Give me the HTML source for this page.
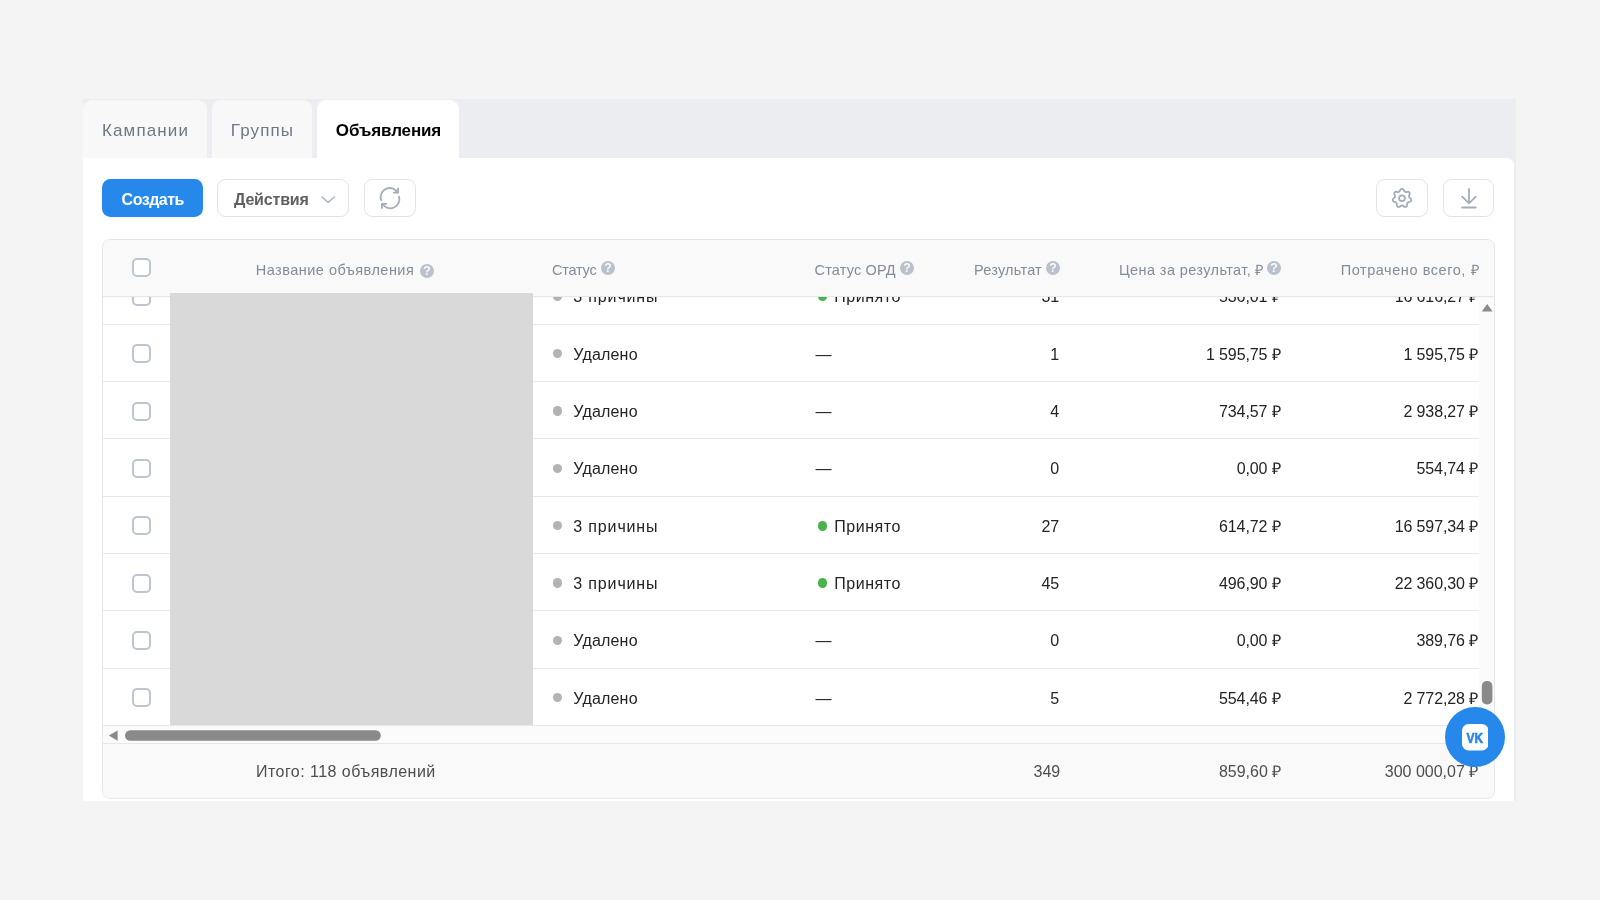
<!DOCTYPE html>
<html lang="ru">
<head>
<meta charset="utf-8">
<title>Объявления</title>
<style>
*{box-sizing:border-box;margin:0;padding:0}
html,body{width:1600px;height:900px;overflow:hidden}
body{background:#f4f4f4;font-family:"Liberation Sans",sans-serif;font-size:16px;color:#222;position:relative}
.abs{position:absolute}
#root{position:absolute;left:0;top:0;width:1600px;height:900px;will-change:transform}
#tabbar{left:83px;top:99.2px;width:1433.3px;height:702px;background:#ebedf0}
#panel{left:83px;top:157.7px;width:1431.3px;height:643.5px;background:#fff;border-radius:0 7px 0 0}
.tab{top:100.4px;height:57.2px;border-radius:9px 9px 0 0;background:#f8f8f9;color:#6d7885;font-size:17px;line-height:61.4px;white-space:nowrap}
.tab span{position:absolute}
.tab.act{background:#fff;color:#000;font-weight:bold}
.btn{top:179px;height:38px;border-radius:8.5px;border:1.3px solid #e1e3e6;background:#fff}
#create{left:102px;width:100.5px;top:179.2px;background:#2688eb;border:none;color:#fff;font-weight:bold;font-size:16px;line-height:42.2px;white-space:nowrap}
#actions{left:217.3px;width:131.7px;color:#5d5f61;font-weight:bold;font-size:16px;line-height:40.4px;white-space:nowrap}
#table{left:102px;top:239px;width:1393px;height:560px;border:1px solid #e6e7e9;border-radius:8px;background:#fff;overflow:hidden}
#thead{left:0;top:0;width:1391px;height:57.3px;background:#f9f9f9;border-bottom:1px solid #e7e7e9;box-shadow:0 1px 1px rgba(0,0,0,.02)}
.th{color:#838c98;font-size:14.5px;white-space:nowrap;line-height:20px;top:20px}
.row{left:0;width:1376px;height:57.333px}
.sep{left:0;width:1376px;height:1px;background:#e7e8ea}
.cb{width:19px;height:19px;border:2px solid #bcc5d0;border-radius:5px;background:#fff;left:29px}
.cell{white-space:nowrap;line-height:20px;font-size:16px;color:#222324}
.n{letter-spacing:-0.12px}
.dot{width:9.3px;height:9.3px;border-radius:50%;background:#b3b3b3}
.dot.g{width:9.6px;height:9.6px}
.dot.g{background:#4bb34b}
#gray{left:170px;top:293px;width:363px;height:432px;background:#d9d9d9}
#hscroll{left:0;top:486px;width:1391px;height:18px;background:#fbfbfb}
#tfoot{left:0;top:503px;width:1391px;height:56px;background:#f9f9f9;border-top:1px solid #e7e7e9}
#vscroll{left:1376px;top:57px;width:15px;height:429px;background:#fbfbfb}
.ft{color:#4d4e50}
</style>
</head>
<body>
<div id="root">
<div id="tabbar" class="abs"></div>
<div id="panel" class="abs"></div>
<div class="abs tab" style="left:83px;width:124px"><span style="left:19px;letter-spacing:1.129px">Кампании</span></div>
<div class="abs tab" style="left:212px;width:100px"><span style="left:18.8px;letter-spacing:1.119px">Группы</span></div>
<div class="abs tab act" style="left:317px;width:142px"><span style="left:18.8px;letter-spacing:-0.135px">Объявления</span></div>

<div id="create" class="abs btn"><span class="abs" style="left:19.6px;letter-spacing:-0.508px">Создать</span></div>
<div id="actions" class="abs btn"><span class="abs" style="left:15.7px;letter-spacing:-0.183px">Действия</span></div>
<svg class="abs" style="left:318px;top:192px" width="20" height="14" viewBox="0 0 20 14"><path d="M3.9 5.0 L10.1 10.3 L16.3 5.0" fill="none" stroke="#aeb7c2" stroke-width="1.6" stroke-linecap="round" stroke-linejoin="round"/></svg>
<div class="abs btn" style="left:364.3px;width:51.5px"></div>
<svg class="abs" style="left:376px;top:184px" width="28" height="28" viewBox="376 184 28 28" fill="none" stroke="#a3adb9" stroke-width="1.8" stroke-linecap="round" stroke-linejoin="round">
<path d="M381.2 200.2 A9.1 9.1 0 0 1 397.6 192.5"/><path d="M398.1 188.3 V192.6 H393.8"/>
<path d="M399.0 196.6 A9.1 9.1 0 0 1 382.6 204.1"/><path d="M381.9 208.1 V203.8 H386.2"/>
</svg>
<div class="abs btn" style="left:1376.3px;width:51.5px"></div>
<svg class="abs" style="left:1388px;top:184px" width="28" height="28" viewBox="1388 184 28 28" fill="none" stroke="#a3adb9" stroke-width="1.8" stroke-linejoin="round">
<path d="M1410.30 198.30 L1409.59 197.73 L1409.19 197.22 L1408.97 196.71 L1408.94 196.16 L1409.09 195.52 L1409.48 194.70 L1409.78 193.81 L1409.71 193.04 L1409.39 192.41 L1408.84 191.95 L1408.11 191.71 L1407.17 191.81 L1406.29 192.01 L1405.63 192.01 L1405.10 191.86 L1404.66 191.53 L1404.24 191.02 L1403.85 190.21 L1403.34 189.42 L1402.70 188.99 L1402.00 188.85 L1401.30 188.99 L1400.66 189.42 L1400.15 190.21 L1399.76 191.02 L1399.34 191.53 L1398.90 191.86 L1398.37 192.01 L1397.71 192.01 L1396.83 191.81 L1395.89 191.71 L1395.16 191.95 L1394.61 192.41 L1394.29 193.04 L1394.22 193.81 L1394.52 194.70 L1394.91 195.52 L1395.06 196.16 L1395.03 196.71 L1394.81 197.22 L1394.41 197.73 L1393.70 198.30 L1393.04 198.97 L1392.77 199.69 L1392.79 200.40 L1393.08 201.05 L1393.64 201.58 L1394.52 201.90 L1395.40 202.11 L1396.00 202.39 L1396.41 202.76 L1396.67 203.24 L1396.82 203.88 L1396.83 204.79 L1396.94 205.72 L1397.33 206.38 L1397.90 206.81 L1398.59 206.99 L1399.35 206.88 L1400.15 206.39 L1400.86 205.83 L1401.46 205.55 L1402.00 205.45 L1402.54 205.55 L1403.14 205.83 L1403.85 206.39 L1404.65 206.88 L1405.41 206.99 L1406.10 206.81 L1406.67 206.38 L1407.06 205.72 L1407.17 204.79 L1407.18 203.88 L1407.33 203.24 L1407.59 202.76 L1408.00 202.39 L1408.60 202.11 L1409.48 201.90 L1410.36 201.58 L1410.92 201.05 L1411.21 200.40 L1411.23 199.69 L1410.96 198.97Z"/><circle cx="1402" cy="198.3" r="2.9"/>
</svg>
<div class="abs btn" style="left:1443.3px;width:51.2px"></div>
<svg class="abs" style="left:1455px;top:184px" width="28" height="28" viewBox="1455 184 28 28" fill="none" stroke="#a3adb9" stroke-width="1.8" stroke-linecap="round" stroke-linejoin="round">
<path d="M1469 188.9 V203.3 M1462.2 196.6 L1469 203.4 L1475.8 196.6 M1462.2 207.5 H1475.8"/>
</svg>

<div id="table" class="abs">

<div class="abs row" style="top:26.87px">
<div class="abs cb" style="top:20.07px"></div>
<div class="abs dot" style="left:450px;top:24.72px"></div>
<div class="abs cell" style="left:470.3px;top:20.27px"><span style="letter-spacing:0.85px">3 причины</span></div>
<div class="abs dot g" style="left:714.5px;top:24.72px"></div>
<div class="abs cell" style="left:731.3px;top:20.27px"><span style="letter-spacing:0.518px">Принято</span></div>
<div class="abs cell n" style="right:420.0px;top:20.27px">31</div>
<div class="abs cell n" style="right:198.5px;top:20.27px">536,01 ₽</div>
<div class="abs cell n" style="right:1.0px;top:20.27px">16 616,27 ₽</div>
</div>
<div class="abs sep" style="top:83.70px"></div>
<div class="abs row" style="top:84.20px">
<div class="abs cb" style="top:20.07px"></div>
<div class="abs dot" style="left:450px;top:24.72px"></div>
<div class="abs cell" style="left:470.3px;top:20.87px"><span style="letter-spacing:0.188px">Удалено</span></div>
<div class="abs cell" style="left:712.4px;top:20.87px">—</div>
<div class="abs cell n" style="right:420.0px;top:20.87px">1</div>
<div class="abs cell n" style="right:198.5px;top:20.87px">1 595,75 ₽</div>
<div class="abs cell n" style="right:1.0px;top:20.87px">1 595,75 ₽</div>
</div>
<div class="abs sep" style="top:141.04px"></div>
<div class="abs row" style="top:141.54px">
<div class="abs cb" style="top:20.07px"></div>
<div class="abs dot" style="left:450px;top:24.72px"></div>
<div class="abs cell" style="left:470.3px;top:20.27px"><span style="letter-spacing:0.188px">Удалено</span></div>
<div class="abs cell" style="left:712.4px;top:20.27px">—</div>
<div class="abs cell n" style="right:420.0px;top:20.27px">4</div>
<div class="abs cell n" style="right:198.5px;top:20.27px">734,57 ₽</div>
<div class="abs cell n" style="right:1.0px;top:20.27px">2 938,27 ₽</div>
</div>
<div class="abs sep" style="top:198.37px"></div>
<div class="abs row" style="top:198.87px">
<div class="abs cb" style="top:20.07px"></div>
<div class="abs dot" style="left:450px;top:24.72px"></div>
<div class="abs cell" style="left:470.3px;top:20.27px"><span style="letter-spacing:0.188px">Удалено</span></div>
<div class="abs cell" style="left:712.4px;top:20.27px">—</div>
<div class="abs cell n" style="right:420.0px;top:20.27px">0</div>
<div class="abs cell n" style="right:198.5px;top:20.27px">0,00 ₽</div>
<div class="abs cell n" style="right:1.0px;top:20.27px">554,74 ₽</div>
</div>
<div class="abs sep" style="top:255.70px"></div>
<div class="abs row" style="top:256.20px">
<div class="abs cb" style="top:20.07px"></div>
<div class="abs dot" style="left:450px;top:24.72px"></div>
<div class="abs cell" style="left:470.3px;top:20.87px"><span style="letter-spacing:0.85px">3 причины</span></div>
<div class="abs dot g" style="left:714.5px;top:24.72px"></div>
<div class="abs cell" style="left:731.3px;top:20.87px"><span style="letter-spacing:0.518px">Принято</span></div>
<div class="abs cell n" style="right:420.0px;top:20.87px">27</div>
<div class="abs cell n" style="right:198.5px;top:20.87px">614,72 ₽</div>
<div class="abs cell n" style="right:1.0px;top:20.87px">16 597,34 ₽</div>
</div>
<div class="abs sep" style="top:313.03px"></div>
<div class="abs row" style="top:313.53px">
<div class="abs cb" style="top:20.07px"></div>
<div class="abs dot" style="left:450px;top:24.72px"></div>
<div class="abs cell" style="left:470.3px;top:20.27px"><span style="letter-spacing:0.85px">3 причины</span></div>
<div class="abs dot g" style="left:714.5px;top:24.72px"></div>
<div class="abs cell" style="left:731.3px;top:20.27px"><span style="letter-spacing:0.518px">Принято</span></div>
<div class="abs cell n" style="right:420.0px;top:20.27px">45</div>
<div class="abs cell n" style="right:198.5px;top:20.27px">496,90 ₽</div>
<div class="abs cell n" style="right:1.0px;top:20.27px">22 360,30 ₽</div>
</div>
<div class="abs sep" style="top:370.37px"></div>
<div class="abs row" style="top:370.87px">
<div class="abs cb" style="top:20.07px"></div>
<div class="abs dot" style="left:450px;top:24.72px"></div>
<div class="abs cell" style="left:470.3px;top:20.27px"><span style="letter-spacing:0.188px">Удалено</span></div>
<div class="abs cell" style="left:712.4px;top:20.27px">—</div>
<div class="abs cell n" style="right:420.0px;top:20.27px">0</div>
<div class="abs cell n" style="right:198.5px;top:20.27px">0,00 ₽</div>
<div class="abs cell n" style="right:1.0px;top:20.27px">389,76 ₽</div>
</div>
<div class="abs sep" style="top:427.70px"></div>
<div class="abs row" style="top:428.20px">
<div class="abs cb" style="top:20.07px"></div>
<div class="abs dot" style="left:450px;top:24.72px"></div>
<div class="abs cell" style="left:470.3px;top:20.87px"><span style="letter-spacing:0.188px">Удалено</span></div>
<div class="abs cell" style="left:712.4px;top:20.87px">—</div>
<div class="abs cell n" style="right:420.0px;top:20.87px">5</div>
<div class="abs cell n" style="right:198.5px;top:20.87px">554,46 ₽</div>
<div class="abs cell n" style="right:1.0px;top:20.87px">2 772,28 ₽</div>
</div>
<div class="abs sep" style="top:485.03px"></div>
<div id="vscroll" class="abs"></div>
<svg class="abs" style="left:1376px;top:57px" width="15" height="429" viewBox="1479 297 15 429"><path d="M1481.8 311.6 L1487.2 304 L1492.6 311.6Z" fill="#8a8a8a"/><rect x="1481.8" y="681" width="10.6" height="23.5" rx="5" fill="#8a8a8a"/></svg>
<div id="thead" class="abs">
<div class="abs cb" style="top:18px"></div>
<div class="abs th" style="left:152.8px;letter-spacing:0.473px">Название объявления</div>
<svg class="abs" style="left:317.3px;top:24px" width="14" height="14" viewBox="0 0 14 14"><circle cx="7" cy="7" r="7" fill="#b8c1cc"/><text x="7.1" y="11.4" text-anchor="middle" font-family="Liberation Sans, sans-serif" font-weight="bold" font-size="12.2" fill="#fafafa">?</text></svg>
<div class="abs th" style="left:449.0px;letter-spacing:-0.219px">Статус</div>
<svg class="abs" style="left:498.20000000000005px;top:20.5px" width="14" height="14" viewBox="0 0 14 14"><circle cx="7" cy="7" r="7" fill="#b8c1cc"/><text x="7.1" y="11.4" text-anchor="middle" font-family="Liberation Sans, sans-serif" font-weight="bold" font-size="12.2" fill="#fafafa">?</text></svg>
<div class="abs th" style="left:711.6px;letter-spacing:0.148px">Статус ОРД</div>
<svg class="abs" style="left:796.6px;top:20.5px" width="14" height="14" viewBox="0 0 14 14"><circle cx="7" cy="7" r="7" fill="#b8c1cc"/><text x="7.1" y="11.4" text-anchor="middle" font-family="Liberation Sans, sans-serif" font-weight="bold" font-size="12.2" fill="#fafafa">?</text></svg>
<div class="abs th" style="left:871.0px;letter-spacing:0.225px">Результат</div>
<svg class="abs" style="left:943.2px;top:20.5px" width="14" height="14" viewBox="0 0 14 14"><circle cx="7" cy="7" r="7" fill="#b8c1cc"/><text x="7.1" y="11.4" text-anchor="middle" font-family="Liberation Sans, sans-serif" font-weight="bold" font-size="12.2" fill="#fafafa">?</text></svg>
<div class="abs th" style="left:1016.0px;letter-spacing:0.391px">Цена за результат, ₽</div>
<svg class="abs" style="left:1164.4px;top:20.5px" width="14" height="14" viewBox="0 0 14 14"><circle cx="7" cy="7" r="7" fill="#b8c1cc"/><text x="7.1" y="11.4" text-anchor="middle" font-family="Liberation Sans, sans-serif" font-weight="bold" font-size="12.2" fill="#fafafa">?</text></svg>
<div class="abs th" style="right:14.9px;letter-spacing:0.565px">Потрачено всего, ₽</div>
</div>
<div id="hscroll" class="abs"></div>
<svg class="abs" style="left:0;top:486px" width="400" height="18" viewBox="103 726 400 18"><path d="M117.6 730.4 L108.8 735.6 L117.6 740.8Z" fill="#8a8a8a"/><rect x="125" y="730.2" width="255.8" height="10.6" rx="5.3" fill="#8a8a8a"/></svg>
<div id="tfoot" class="abs">
<div class="abs cell ft" style="left:153px;top:17.6px"><span style="letter-spacing:0.46px">Итого: 118 объявлений</span></div>
<div class="abs cell ft" style="right:433.8px;top:17.6px">349</div>
<div class="abs cell ft" style="right:212.7px;top:17.6px">859,60 ₽</div>
<div class="abs cell ft" style="right:15.7px;top:17.6px">300 000,07 ₽</div>
</div>
</div>
<div id="gray" class="abs"></div>
<div class="abs" style="left:1445px;top:707px;width:60px;height:60px;border-radius:50%;background:#2688eb"></div>
<svg class="abs" style="left:1462px;top:724.2px" width="26.4" height="26.4" viewBox="0 0 26.4 26.4"><rect width="26.4" height="26.4" rx="6.5" fill="#fff"/><text x="4.6" y="18.55" textLength="16.6" lengthAdjust="spacingAndGlyphs" style="font-family:'Liberation Sans',sans-serif;font-weight:bold;font-size:15px" fill="#2688eb" stroke="#2688eb" stroke-width="0.7" stroke-linejoin="round">VK</text></svg>
</div>
</body>
</html>
